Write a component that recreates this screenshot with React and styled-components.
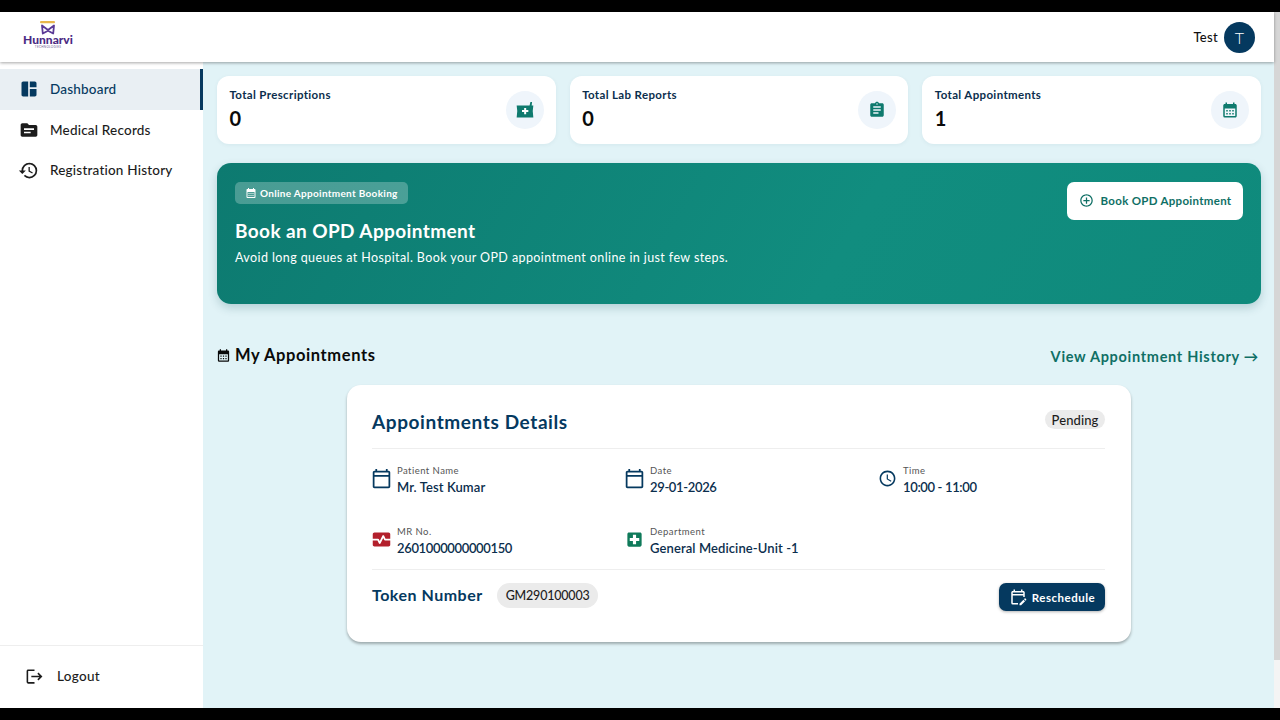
import React from "react";
import styled, { createGlobalStyle } from "styled-components";
import {
  MdSpaceDashboard,
  MdTopic,
  MdHistory,
  MdLogout,
  MdCalendarMonth,
  MdAssignment,
  MdOutlineCalendarToday,
  MdAccessTime,
  MdMonitorHeart,
  MdLocalHospital,
  MdOutlineEditCalendar,
  MdAddCircleOutline,
} from "react-icons/md";

const GlobalStyle = createGlobalStyle`
  html, body {
    margin: 0;
    background: #000;
    overflow: hidden;
  }
  * {
    box-sizing: border-box;
    font-family: "Lato", "Noto Sans", sans-serif;
  }
`;

const Frame = styled.div`
  height: 720px;
  padding: 12px 0;
  display: flex;
`;

const Page = styled.div`
  flex: 1;
  display: flex;
  flex-direction: column;
  background: #e1f3f7;
  min-width: 0;
`;

const Scrollbar = styled.div`
  width: 6px;
  background: #f4f4f4;
`;

const ScrollThumb = styled.div`
  height: 648px;
  background: #d6d6d6;
`;

const Header = styled.header`
  height: 50px;
  background: #fff;
  display: flex;
  align-items: center;
  justify-content: space-between;
  padding: 0 19px 0 23px;
  box-shadow: 0 1px 3px rgba(0, 0, 0, 0.35);
  position: relative;
  z-index: 2;
`;

const Logo = styled.div`
  display: flex;
  flex-direction: column;
  align-items: center;
  width: 50px;
  margin-bottom: 3px;
`;

const LogoName = styled.span`
  font-size: 12px;
  line-height: 10px;
  font-weight: 900;
  color: #4b2a83;
`;

const LogoSub = styled.span`
  font-size: 3px;
  line-height: 5px;
  color: #6b5a93;
  letter-spacing: 0.3px;
`;

const UserBox = styled.div`
  display: flex;
  align-items: center;
  gap: 6px;
  font-size: 13px;
  font-weight: 500;
  letter-spacing: 0.3px;
  color: #111;
`;

const Avatar = styled.div`
  width: 31px;
  height: 31px;
  border-radius: 50%;
  background: #05395f;
  color: #fff;
  display: flex;
  align-items: center;
  justify-content: center;
  font-size: 16px;
  font-weight: 300;
`;

const Body = styled.div`
  flex: 1;
  display: flex;
  min-height: 0;
`;

const Sidebar = styled.aside`
  width: 203px;
  background: #fff;
  display: flex;
  flex-direction: column;
  padding-top: 7px;
`;

const NavItem = styled.div`
  height: 40.5px;
  display: flex;
  align-items: center;
  gap: 12px;
  padding-left: 19px;
  font-size: 13.5px;
  font-weight: 500;
  letter-spacing: 0.2px;
  color: ${(p) => (p.$active ? "#05395f" : "#1c1c1c")};
  background: ${(p) => (p.$active ? "#e9eff3" : "transparent")};
  border-right: 3px solid ${(p) => (p.$active ? "#05395f" : "transparent")};
`;

const NavIcon = styled.span`
  width: 19px;
  display: flex;
  justify-content: center;
  font-size: ${(p) => p.$size || 20}px;
  svg {
    flex: none;
  }
`;

const LogoutRow = styled.div`
  margin-top: auto;
  height: 63px;
  border-top: 1px solid #eeeeee;
  display: flex;
  align-items: center;
  gap: 13px;
  padding: 0 0 2px 25px;
  font-size: 13.5px;
  font-weight: 500;
  letter-spacing: 0.3px;
  color: #1c1c1c;
  svg {
    font-size: 19px;
  }
`;

const Main = styled.main`
  flex: 1;
  padding: 14px 13px 0 14px;
  min-width: 0;
`;

const StatsRow = styled.div`
  display: grid;
  grid-template-columns: repeat(3, 1fr);
  gap: 14px;
`;

const StatCard = styled.div`
  height: 68px;
  background: #fff;
  border-radius: 12px;
  padding: 0 12px 0 12.5px;
  display: flex;
  align-items: center;
  justify-content: space-between;
  box-shadow: 0 1px 4px rgba(0, 60, 90, 0.06);
`;

const StatText = styled.div`
  padding-bottom: 3px;
`;

const StatLabel = styled.div`
  font-size: 11.5px;
  font-weight: 700;
  letter-spacing: 0.35px;
  color: #0b2e4d;
  margin-bottom: 6px;
`;

const StatValue = styled.div`
  font-size: 20px;
  line-height: 22px;
  font-weight: 700;
  color: #0a0a0a;
`;

const StatIcon = styled.div`
  width: 38px;
  height: 38px;
  border-radius: 50%;
  background: #eff5fb;
  color: #0f7a6e;
  display: flex;
  align-items: center;
  justify-content: center;
  font-size: 18px;
`;

const Banner = styled.section`
  height: 141px;
  margin-top: 19px;
  border-radius: 14px;
  background: linear-gradient(120deg, #0d7a70 0%, #118d7f 60%, #0f8a7c 100%);
  box-shadow: 0 4px 10px rgba(0, 70, 80, 0.2);
  padding: 19px 18px 0 18px;
  display: flex;
  justify-content: space-between;
  align-items: flex-start;
  color: #fff;
`;

const BannerTag = styled.div`
  display: inline-flex;
  align-items: center;
  gap: 3px;
  height: 22px;
  padding: 0 10px;
  border-radius: 5px;
  background: rgba(255, 255, 255, 0.25);
  font-size: 10px;
  font-weight: 700;
  letter-spacing: 0.3px;
  svg {
    font-size: 12px;
  }
`;

const BannerTitle = styled.h2`
  margin: 15px 0 6px;
  font-size: 19px;
  line-height: 24px;
  font-weight: 700;
  letter-spacing: 0.4px;
`;

const BannerText = styled.p`
  margin: 0;
  font-size: 12.5px;
  line-height: 18px;
  letter-spacing: 0.4px;
`;

const BookButton = styled.button`
  width: 176px;
  height: 38px;
  border: 0;
  border-radius: 7px;
  background: #fff;
  color: #0f6f65;
  display: flex;
  align-items: center;
  justify-content: center;
  gap: 7px;
  padding: 0 0 2px;
  font-size: 11.5px;
  font-weight: 700;
  letter-spacing: 0.3px;
  svg {
    font-size: 15px;
  }
`;

const SectionHead = styled.div`
  margin-top: 41px;
  display: flex;
  justify-content: space-between;
  align-items: flex-start;
  padding-right: 2px;
`;

const SectionTitle = styled.h3`
  margin: 0 0 0 -1px;
  display: flex;
  align-items: center;
  gap: 4px;
  font-size: 16.5px;
  line-height: 20px;
  font-weight: 700;
  letter-spacing: 0.6px;
  color: #0a0a0a;
  svg {
    font-size: 15px;
  }
`;

const HistoryLink = styled.a`
  margin-top: 3px;
  font-size: 14.5px;
  line-height: 18px;
  font-weight: 700;
  letter-spacing: 0.7px;
  color: #0f6f65;
`;

const DetailsCard = styled.section`
  width: 784px;
  height: 257px;
  margin: 19px 0 0 130px;
  background: #fff;
  border-radius: 14px;
  box-shadow: 0 2px 3px rgba(0, 0, 0, 0.3);
  padding: 0 26px 0 25px;
`;

const CardHead = styled.div`
  height: 64px;
  display: flex;
  justify-content: space-between;
  align-items: flex-start;
  padding-top: 25px;
  border-bottom: 1px solid #eeeeee;
`;

const CardTitle = styled.h2`
  margin: 0;
  font-size: 19px;
  line-height: 24px;
  font-weight: 700;
  letter-spacing: 0.6px;
  color: #05395f;
`;

const Chip = styled.span`
  display: inline-flex;
  align-items: center;
  height: ${(p) => p.$h || 19}px;
  padding: 0 ${(p) => p.$pad || 6.5}px;
  border-radius: 13px;
  background: #ebebeb;
  color: #1d1d1d;
  font-size: ${(p) => p.$fs || 13}px;
  font-weight: 500;
  letter-spacing: ${(p) => p.$ls || 0.1}px;
`;

const InfoGrid = styled.div`
  display: grid;
  grid-template-columns: 253px 253px 1fr;
  grid-auto-rows: 60.5px;
  padding-top: 16px;
  height: 121px;
  border-bottom: 1px solid #eeeeee;
`;

const InfoItem = styled.div`
  display: flex;
  align-items: flex-start;
  gap: 7px;
`;

const InfoIcon = styled.div`
  width: 18px;
  height: 27px;
  display: flex;
  align-items: center;
  justify-content: center;
  font-size: ${(p) => p.$size}px;
  color: ${(p) => p.$color || "#05395f"};
  svg {
    flex: none;
  }
`;

const InfoLabel = styled.div`
  font-size: 9.5px;
  line-height: 12px;
  letter-spacing: 0.45px;
  color: #555;
`;

const InfoValue = styled.div`
  margin-top: 1px;
  font-size: 13px;
  line-height: 18px;
  font-weight: 600;
  letter-spacing: ${(p) => (p.$numeric ? -0.35 : 0.1)}px;
  color: #0b2e4d;
`;

const CardFoot = styled.div`
  height: 52px;
  display: flex;
  align-items: center;
  justify-content: space-between;
`;

const TokenGroup = styled.div`
  display: flex;
  align-items: center;
  gap: 14px;
  margin-bottom: 1px;
`;

const TokenLabel = styled.span`
  font-size: 16px;
  font-weight: 700;
  letter-spacing: 0.5px;
  color: #05395f;
  margin-bottom: 2px;
`;

const RescheduleButton = styled.button`
  width: 106px;
  height: 28px;
  border: 0;
  border-radius: 7px;
  background: #05395f;
  color: #fff;
  box-shadow: 0 1px 3px rgba(0, 0, 0, 0.3);
  display: flex;
  align-items: center;
  justify-content: center;
  gap: 5px;
  padding: 0;
  font-size: 11.5px;
  font-weight: 700;
  letter-spacing: 0.5px;
  margin-top: 2px;
  svg {
    font-size: 18px;
  }
`;

const PrescriptionIcon = () => (
  <svg width="20" height="20" viewBox="0 0 24 24">
    <path
      d="M2 6.5H17.5L18.5 2.5H20.5L20 6.5H22Q20.5 13 22 21H2Q3.5 13 2 6.5Z"
      fill="currentColor"
    />
    <path d="M11 9.5h2.4v2.6H16v2.4h-2.6V17H11v-2.5H8.4v-2.4H11Z" fill="#fff" />
  </svg>
);

const details = [
  { label: "Patient Name", value: "Mr. Test Kumar", icon: <MdOutlineCalendarToday />, size: 21 },
  { label: "Date", value: "29-01-2026", icon: <MdOutlineCalendarToday />, size: 21, numeric: true },
  { label: "Time", value: "10:00 - 11:00", icon: <MdAccessTime />, size: 19, numeric: true },
  { label: "MR No.", value: "2601000000000150", icon: <MdMonitorHeart />, size: 21, color: "#b3202c", numeric: true },
  { label: "Department", value: "General Medicine-Unit -1", icon: <MdLocalHospital />, size: 19, color: "#0f7a5a" },
];

const stats = [
  { label: "Total Prescriptions", value: 0, icon: <PrescriptionIcon /> },
  { label: "Total Lab Reports", value: 0, icon: <MdAssignment /> },
  { label: "Total Appointments", value: 1, icon: <MdCalendarMonth /> },
];

const LogoMark = () => (
  <svg width="18" height="14" viewBox="0 0 18 14">
    <rect x="1" y="0" width="15" height="2.2" rx="1" fill="#e8b64c" />
    <path
      d="M3 4.5L9 9L15 4.5L14.2 12.5L9 9.8L3.8 12.5Z"
      fill="none"
      stroke="#5b3a96"
      strokeWidth="1.8"
      strokeLinejoin="round"
    />
  </svg>
);

export default function App() {
  return (
    <Frame>
      <GlobalStyle />
      <Page>
        <Header>
          <Logo>
            <LogoMark />
            <LogoName>Hunnarvi</LogoName>
            <LogoSub>TECHNOLOGIES</LogoSub>
          </Logo>
          <UserBox>
            Test
            <Avatar>T</Avatar>
          </UserBox>
        </Header>
        <Body>
          <Sidebar>
            <NavItem $active>
              <NavIcon $size={20}>
                <MdSpaceDashboard />
              </NavIcon>
              Dashboard
            </NavItem>
            <NavItem>
              <NavIcon $size={20}>
                <MdTopic />
              </NavIcon>
              Medical Records
            </NavItem>
            <NavItem>
              <NavIcon $size={21}>
                <MdHistory />
              </NavIcon>
              Registration History
            </NavItem>
            <LogoutRow>
              <MdLogout />
              Logout
            </LogoutRow>
          </Sidebar>
          <Main>
            <StatsRow>
              {stats.map((s) => (
                <StatCard key={s.label}>
                  <StatText>
                    <StatLabel>{s.label}</StatLabel>
                    <StatValue>{s.value}</StatValue>
                  </StatText>
                  <StatIcon>{s.icon}</StatIcon>
                </StatCard>
              ))}
            </StatsRow>
            <Banner>
              <div>
                <BannerTag>
                  <MdCalendarMonth />
                  Online Appointment Booking
                </BannerTag>
                <BannerTitle>Book an OPD Appointment</BannerTitle>
                <BannerText>Avoid long queues at Hospital. Book your OPD appointment online in just few steps.</BannerText>
              </div>
              <BookButton>
                <MdAddCircleOutline />
                Book OPD Appointment
              </BookButton>
            </Banner>
            <SectionHead>
              <SectionTitle>
                <MdCalendarMonth />
                My Appointments
              </SectionTitle>
              <HistoryLink>View Appointment History →</HistoryLink>
            </SectionHead>
            <DetailsCard>
              <CardHead>
                <CardTitle>Appointments Details</CardTitle>
                <Chip>Pending</Chip>
              </CardHead>
              <InfoGrid>
                {details.map((d) => (
                  <InfoItem key={d.label}>
                    <InfoIcon $color={d.color} $size={d.size}>
                      {d.icon}
                    </InfoIcon>
                    <div>
                      <InfoLabel>{d.label}</InfoLabel>
                      <InfoValue $numeric={d.numeric}>{d.value}</InfoValue>
                    </div>
                  </InfoItem>
                ))}
              </InfoGrid>
              <CardFoot>
                <TokenGroup>
                  <TokenLabel>Token Number</TokenLabel>
                  <Chip $h={25} $pad={9} $fs={12.5} $ls={-0.2}>
                    GM290100003
                  </Chip>
                </TokenGroup>
                <RescheduleButton>
                  <MdOutlineEditCalendar />
                  Reschedule
                </RescheduleButton>
              </CardFoot>
            </DetailsCard>
          </Main>
        </Body>
      </Page>
      <Scrollbar>
        <ScrollThumb />
      </Scrollbar>
    </Frame>
  );
}
